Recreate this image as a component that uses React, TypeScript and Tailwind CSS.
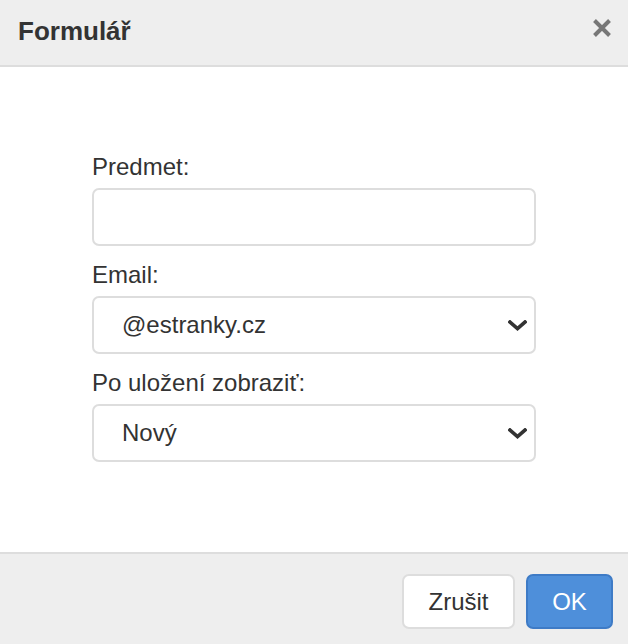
import React from 'react';

const FONT = { fontFamily: '"Liberation Sans", Arial, Helvetica, sans-serif' };

function Chevron() {
  return (
    <svg
      className="pointer-events-none absolute right-[9px] top-1/2 -mt-[5px]"
      width="19"
      height="11"
      viewBox="0 0 19 11"
      fill="none"
    >
      <path d="M2 2 L9.5 8.5 L17 2" stroke="#333" strokeWidth="3.6" strokeLinecap="square" />
    </svg>
  );
}

function Field({ label, children }: { label: string; children: React.ReactNode }) {
  return (
    <div className="flex flex-col">
      <label className="text-[24px] leading-[34px] text-[#333] mb-[4px]">{label}</label>
      {children}
    </div>
  );
}

function SelectBox({ value, options }: { value: string; options: string[] }) {
  return (
    <div className="relative">
      <select
        defaultValue={value}
        className="w-full h-[58px] appearance-none bg-white border-2 border-[#dddddd] rounded-[7px] pl-[28px] pr-10 text-[24px] text-[#333] outline-none"
        style={FONT}
      >
        {options.map((o) => (
          <option key={o}>{o}</option>
        ))}
      </select>
      <Chevron />
    </div>
  );
}

export default function App() {
  return (
    <div className="w-[628px] h-[644px] bg-white flex flex-col" style={FONT}>
      {/* Header */}
      <div className="h-[67px] bg-[#eeeeee] border-b-2 border-[#dddddd] flex items-start justify-between pl-[18px] pr-[16px] pt-[16px]">
        <h1 className="text-[26px] leading-[30px] font-bold text-[#333]">Formulář</h1>
        <svg width="20" height="20" viewBox="0 0 20 20" className="mt-[2px]">
          <path d="M2.5 2.5 L17.5 17.5 M17.5 2.5 L2.5 17.5" stroke="#777" strokeWidth="4" strokeLinecap="butt" />
        </svg>
      </div>

      {/* Body */}
      <div className="flex-1 px-[92px] pt-[83px] flex flex-col gap-[12px]">
        <Field label="Predmet:">
          <input
            type="text"
            className="w-full h-[58px] bg-white border-2 border-[#dddddd] rounded-[7px] px-3 text-[24px] text-[#333] outline-none"
            style={FONT}
          />
        </Field>
        <Field label="Email:">
          <SelectBox value="@estranky.cz" options={['@estranky.cz']} />
        </Field>
        <Field label="Po uložení zobraziť:">
          <SelectBox value="Nový" options={['Nový', 'Seznam']} />
        </Field>
      </div>

      {/* Footer */}
      <div className="h-[92px] bg-[#eeeeee] border-t-2 border-[#dddddd] flex items-start justify-end gap-[11px] pr-[15px] pt-[20px]">
        <button className="h-[55px] w-[113px] bg-white border-2 border-[#dddddd] rounded-[7px] text-[24px] text-[#333]">
          Zrušit
        </button>
        <button className="h-[55px] w-[87px] bg-[#4e8fda] border-2 border-[#3e7bc6] rounded-[7px] text-[24px] text-white">
          OK
        </button>
      </div>
    </div>
  );
}
